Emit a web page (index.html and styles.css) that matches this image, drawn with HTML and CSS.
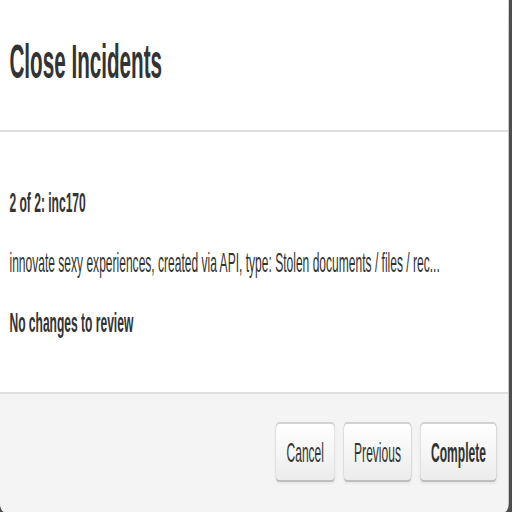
FILE: index.html
```html
<!DOCTYPE html>
<html>
<head>
<meta charset="utf-8">
<title>Close Incidents</title>
<link rel="stylesheet" href="styles.css">
</head>
<body>
<div class="stage">
  <div class="modal">
    <div class="modal-header">
      <h3 class="modal-title">Close Incidents</h3>
    </div>
    <div class="modal-body">
      <p class="strong">2 of 2: inc170</p>
      <p>innovate sexy experiences, created via API, type: Stolen documents / files / rec...</p>
      <p class="strong">No changes to review</p>
    </div>
    <div class="modal-footer">
      <button class="btn">Cancel</button>
      <button class="btn">Previous</button>
      <button class="btn btn-primary">Complete</button>
    </div>
  </div>
</div>
</body>
</html>
```
FILE: styles.css
```css
html, body {
  margin: 0;
  padding: 0;
  width: 512px;
  height: 512px;
  overflow: hidden;
  background: #4d4d4d;
}

.stage {
  width: 595px;
  height: 256px;
  transform: scale(0.86, 2);
  transform-origin: 0 0;
  font-family: "Liberation Sans", Arial, sans-serif;
  font-size: 14px;
  color: #333;
}

.modal {
  width: 592px;
  height: 256px;
  background: #fff;
  border-right: 1px solid rgba(0, 0, 0, 0.3);
  border-radius: 0 0 5px 5px;
  box-sizing: border-box;
  display: flex;
  flex-direction: column;
  overflow: hidden;
}

.modal-header {
  padding: 14px 11px 17px;
  border-bottom: 1px solid #dedede;
}

.modal-title {
  margin: 0;
  font-size: 24px;
  line-height: 34px;
  font-weight: bold;
  color: #333;
}

.modal-body {
  padding: 25px 11px 25px;
}

.modal-body p {
  margin: 0 0 10px;
  line-height: 20px;
}

.modal-body p:last-child {
  margin-bottom: 0;
}

.strong {
  font-weight: bold;
}

.modal-footer {
  flex: 1;
  border-top: 1px solid #dedede;
  background: #f4f4f4;
  padding: 14px 13px 15px;
  display: flex;
  justify-content: flex-end;
  align-items: flex-start;
  gap: 9px;
}

.btn {
  font-family: "Liberation Sans", Arial, sans-serif;
  font-size: 14px;
  line-height: 20px;
  height: 30px;
  padding: 4px 12px;
  color: #333;
  background: linear-gradient(#ffffff, #ececec);
  border: 1px solid #d2d2d2;
  border-bottom-color: #bdbdbd;
  border-radius: 4px;
  box-shadow: inset 0 1px 0 rgba(255, 255, 255, 0.2), 0 1px 2px rgba(0, 0, 0, 0.05);
  box-sizing: border-box;
  cursor: pointer;
}

.btn-primary {
  font-weight: bold;
}
```
